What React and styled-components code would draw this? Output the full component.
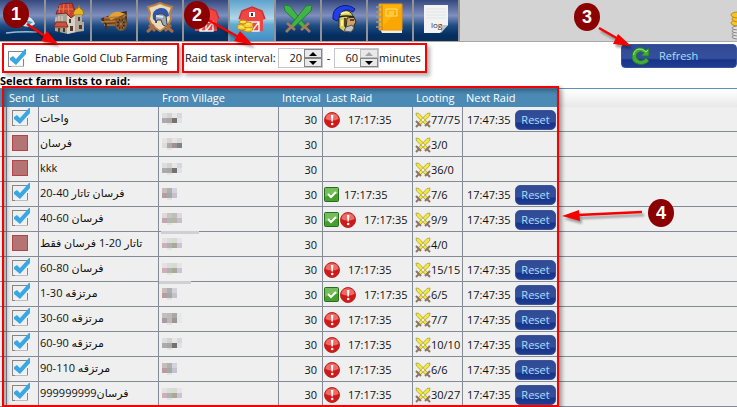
import React, { useState } from "react";
import styled, { createGlobalStyle, css } from "styled-components";

const GlobalStyle = createGlobalStyle`
  *, *::before, *::after { box-sizing: border-box; }
  body {
    margin: 0;
    overflow-x: hidden;
    background: #fff;
    color: #111;
    font-family: "Open Sans", "Noto Sans", "DejaVu Sans", sans-serif;
    font-size: 11px;
    line-height: 16px;
  }
  button, input { font: inherit; margin: 0; padding: 0; }
`;

const Page = styled.main`
  position: relative;
  display: flex;
  flex-direction: column;
`;

const Toolbar = styled.nav`
  display: flex;
  height: 42px;
  background: #d3d3d3;
  border-bottom: 1px solid #a9a9a9;
`;

const ToolButton = styled.button`
  width: 46px;
  border: 0;
  border-right: 2px solid #929294;
  background: ${(p) =>
    p.$active
      ? "linear-gradient(#5ea2cc, #b3d7ea 45%, #63a9d4 60%, #3f8fc4)"
      : "linear-gradient(#35497f, #7f8fbd 38%, #204d84 62%, #032f63 85%, #0b2c54)"};
  svg { display: block; }
`;

const Spacer = styled.div`flex: 1;`;

const Coins = styled.div`
  width: 7px;
  overflow: hidden;
  svg { display: block; }
`;

const Controls = styled.div`
  display: flex;
  align-items: flex-start;
  gap: 3px;
  height: 32px;
  padding: 1px 0 0 2px;
`;

const Framed = styled.div`
  display: flex;
  align-items: center;
  height: 30px;
  border: 2px solid #f60000;
  box-shadow: 3px 3px 4px rgba(0, 0, 0, 0.3);
  font-size: ${(p) => (p.$large ? 12 : 11)}px;
  white-space: nowrap;
`;

const EnableBox = styled(Framed)`
  width: 177px;
  padding-left: 4px;
  gap: 7px;
`;

const IntervalBox = styled(Framed)`
  width: 245px;
  padding-left: 1px;
`;

const IntervalLabel = styled.label`width: 93px;`;
const Dash = styled.span`
  width: 11px;
  text-align: center;
`;

const Stepper = styled.span`
  display: flex;
  width: 45px;
  height: 20px;
  border: 1px solid #c6c6cc;
`;

const StepInput = styled.input`
  width: 25px;
  border: 0;
  padding-right: 2px;
  text-align: right;
  background: #fff;
  color: #111;
`;

const StepButtons = styled.span`
  display: flex;
  flex-direction: column;
  width: 18px;
`;

const StepButton = styled.button`
  display: grid;
  place-items: center;
  flex: 1;
  min-height: 0;
  border: 1px solid ${(p) => (p.$dim ? "#bcbcbc" : "#858585")};
  background: #e9e9e9;
  color: ${(p) => (p.$dim ? "#a5a5a5" : "#000")};
`;

const blueGloss = css`
  border: 1px solid #3a5498;
  background: linear-gradient(#304b94 0%, #354f9d 60%, #17348a 68%, #203d91 100%);
  color: #a8def8;
`;

const RefreshButton = styled.button`
  ${blueGloss}
  display: flex;
  align-items: center;
  gap: 8px;
  width: 116px;
  height: 24px;
  margin: 1px 0 0 auto;
  padding-left: 9px;
  border-radius: 4px;
`;

const ResetButton = styled.button`
  ${blueGloss}
  width: 41px;
  height: 20px;
  border-radius: 5px;
  line-height: 18px;
`;

const Heading = styled.h1`
  margin: 0;
  height: 14px;
  font-size: 11px;
  font-weight: 700;
  line-height: 13px;
  color: #000;
`;

const TableArea = styled.section`position: relative;`;

const TableFrame = styled.div`
  position: absolute;
  top: -2px;
  bottom: 0;
  left: 2px;
  width: 557px;
  border: 2px solid #f60000;
  box-shadow: 3px 2px 4px rgba(0, 0, 0, 0.35), inset 3px 3px 4px rgba(0, 0, 0, 0.3);
  pointer-events: none;
`;

const Table = styled.table`
  width: 100%;
  table-layout: fixed;
  border-collapse: separate;
  border-spacing: 0;
  background: #efefef;
`;

const Head = styled.th`
  height: 19px;
  padding: 0 0 0 ${(p) => p.$pad ?? 3}px;
  border-top: 1px solid #5d8fba;
  background: ${(p) => (p.$blank ? "linear-gradient(#fff, #e8e8e8)" : "#4a8ab5")};
  color: #fff;
  font-weight: 400;
  text-align: left;
  line-height: 18px;
  white-space: nowrap;
`;

const Cell = styled.td`
  position: relative;
  height: 25px;
  padding: 1px 0 0 ${(p) => p.$pad ?? 1}px;
  border-bottom: 1px solid #858a96;
  border-right: ${(p) => (p.$open ? 0 : 1)}px solid #858a96;
  white-space: nowrap;
  vertical-align: middle;
`;

const NumberCell = styled(Cell)`
  padding-right: 5px;
  text-align: right;
`;

const ListCell = styled(Cell)`
  padding-top: 0;
  padding-bottom: 3px;
  line-height: 16px;
`;

const SendCell = styled(Cell)`
  vertical-align: top;
`;

const Inline = styled.span`
  display: flex;
  align-items: center;
  svg { flex: none; }
`;

const RaidTime = styled.span`margin-left: ${(p) => (p.$wide ? 8 : 4)}px;`;

const NextTime = styled.span`width: 48px;`;

const CheckWrap = styled.label`
  display: grid;
  width: 20px;
  height: 18px;
  > * { grid-area: 1 / 1; }
  svg { pointer-events: none; }
`;

const CheckInput = styled.input`
  appearance: none;
  width: 16px;
  height: 16px;
  margin-top: 2px;
  border: 1px solid #858585;
  background: transparent;
  ${(p) =>
    p.$red &&
    css`
      &:not(:checked) {
        border-color: #b04448;
        background: #b57474;
      }
    `}
`;

const RedactionBar = styled.span`
  position: absolute;
  top: -1px;
  left: ${(p) => p.$left}px;
  width: ${(p) => p.$width}px;
  height: 3px;
  background: #cfcfd4;
`;

const Badge = styled.span`
  position: absolute;
  left: ${(p) => p.$x}px;
  top: ${(p) => p.$y}px;
  width: 26px;
  height: 28px;
  border-radius: 50%;
  background: #8b0000;
  color: #fff;
  font: bold 18px/28px "Liberation Sans", sans-serif;
  text-align: center;
`;

const ArrowLayer = styled.svg`
  position: absolute;
  top: 0;
  left: 0;
  pointer-events: none;
  filter: drop-shadow(2px 3px 1px rgba(0, 0, 0, 0.35));
`;

function ToolIcon({ children }) {
  return <svg width="44" height="41" viewBox="0 0 44 41" aria-hidden="true">{children}</svg>;
}

function Barn() {
  return (
    <g>
      <path d="M9 19L12 11L22 7L32 11L35 19L33 20V31H11V20Z" fill="#ef4543" />
      <path d="M9 19L12 11L22 7L32 11L35 19" fill="none" stroke="#c93038" strokeWidth="1.5" />
      <rect x="19" y="12" width="6" height="5" fill="#fff" />
      <rect x="21" y="13" width="2" height="3" fill="#4a2930" />
      <path d="M16 22H29V31H16ZM22 22V31M16 31L22 22M29 22L22 31" fill="#ef4543" stroke="#f4f4f4" strokeWidth="1.4" />
    </g>
  );
}

const toolIcons = [
  ["Overview", <g><path d="M22 17Q31 14 35 24Q29 29 21 25Z" fill="#d8eef6" /><path d="M25 20L33 22L29 25Z" fill="#4ba9c4" /><path d="M6 33Q21 31 37 32" stroke="#9eb8ce" strokeWidth="1.5" fill="none" /></g>],
  ["Buildings", (
    <g>
      <path d="M13 12L25 8L31 14V32L22 34L9 31V20Z" fill="#a9a196" />
      <path d="M21 16L29 13V32L21 34Z" fill="#d8d2c5" />
      <path d="M10 14L14 4L26 3L30 14L25 18L20 13Z" fill="#c8402f" stroke="#78261e" />
      <path d="M8 27L10 22L20 22L22 27Z" fill="#c9553c" stroke="#842c20" />
      <path d="M14 5L13 13M18 4L17 13M22 4L23 14M11 9H27" stroke="#e87954" />
      <path d="M27 15Q28 9 32 8L33 5L34 8Q38 10 38 15Z" fill="#e7b51d" stroke="#9b701c" />
      <path d="M29 15H36V22H38V31L30 32Z" fill="#b4aa9c" />
      <path d="M12 28H14V32H12ZM17 28H19V32H17ZM23 19H25V23H23ZM24 26H27V31H24ZM32 17H34V21H32ZM33 25H36V29H33Z" fill="#51392f" />
      <path d="M10 17V21M13 16V21M16 16V21" stroke="#ded4c6" />
    </g>
  )],
  ["Market", (
    <g>
      <path d="M10 19L24 14L34 12V22L27 25L14 24Z" fill="#85501f" stroke="#3f2816" strokeWidth="1.5" />
      <path d="M16 17Q21 11 28 12L33 14L19 20Z" fill="#e3a235" />
      <path d="M9 22L26 21L34 15M12 18L27 17M12 25L25 25" fill="none" stroke="#b47a3b" strokeWidth="1.5" />
      <path d="M14 24V30" stroke="#4d3019" strokeWidth="2" />
      <ellipse cx="29" cy="24" rx="5" ry="6" fill="#3c291c" stroke="#7d552a" strokeWidth="2" />
      <path d="M29 18V30M24 24H34M26 20L32 28M32 20L26 28" stroke="#a97640" />
    </g>
  )],
  ["Defence", (
    <g>
      <path d="M10 32L34 9M34 32L10 9" stroke="#b96d35" strokeWidth="2" />
      <path d="M10 7L17 5L22 3L27 5L34 7L32 13L33 19Q31 26 22 31Q13 26 11 19L12 13Z" fill="#eadab9" stroke="#b88142" strokeWidth="2" />
      <path d="M15 19Q13 10 22 8Q30 7 31 16L28 17Q24 11 19 16L19 23Z" fill="#3155a9" />
      <path d="M17 17Q21 11 28 16L29 24L32 28L25 25L23 20H19L18 23Z" fill="#9ca7b1" stroke="#35414c" />
      <path d="M18 16L25 17" stroke="#dce5ea" strokeWidth="2" />
      <path d="M9 32L16 25M35 32L28 25M11 25L17 31M33 25L27 31" stroke="#a96d48" strokeWidth="2.5" />
    </g>
  )],
  ["Farms", <Barn />],
  ["Gold farming", (
    <g><Barn /><g fill="#f7cf31" stroke="#c18b15"><ellipse cx="18" cy="29" rx="5" ry="3" /><ellipse cx="12" cy="27" rx="5" ry="3" /><ellipse cx="18" cy="25" rx="5" ry="3" /><ellipse cx="13" cy="22" rx="4" ry="2" /></g><path d="M11 22H15M16 24H20M16 29H20M10 27H14" stroke="#fff087" /></g>
  )],
  ["Attack", (
    <g>
      <path d="M8 5L14 6L30 26L28 29L9 11Z" fill="#42b348" stroke="#237b37" />
      <path d="M36 5L30 6L14 26L16 29L35 11Z" fill="#42b348" stroke="#237b37" />
      <path d="M25 30L33 23M19 30L11 23M29 27L34 32M15 27L10 32" stroke="#a67b58" strokeWidth="2.5" />
    </g>
  )],
  ["Hero", (
    <g>
      <path d="M15 21L11 19Q10 10 17 7Q25 3 33 9L31 12Q23 7 18 14L17 20Z" fill="#203ee9" stroke="#101b7c" />
      <path d="M17 18Q18 11 25 11Q31 12 31 18L29 21L29 31L22 32L17 28Z" fill="#d8ce65" stroke="#302c22" />
      <path d="M25 18L32 17L34 22L32 25L32 30L28 32L24 28Z" fill="#d6a263" stroke="#352817" />
      <path d="M17 17Q24 15 32 17M23 18V26L27 30M28 20H32" fill="none" stroke="#26221e" strokeWidth="1.5" />
      <path d="M19 14Q23 11 27 13M20 20V26" fill="none" stroke="#fff680" strokeWidth="2" />
      <path d="M24 27L30 25L32 28L29 32L22 31Z" fill="#bfc4c6" stroke="#555" />
    </g>
  )],
  ["Notes", (
    <g>
      <path d="M12 29H34V33H14Z" fill="#f5ead7" />
      <path d="M11 4H34V30H11Z" fill="#ffb20b" stroke="#ed9400" />
      <path d="M12 30L34 6V30Z" fill="#f29b00" opacity=".5" />
      <path d="M14 5V30" stroke="#ca7900" />
      <path d="M8 7H13M8 12H13M8 17H13M8 22H13M8 27H13" stroke="#8e9ba0" strokeWidth="1.5" />
      <path d="M18 9H29V16H18ZM21 12H26M21 14H26" fill="none" stroke="#ffe07b" />
    </g>
  )],
  ["Log", (
    <g>
      <path d="M10 5H34V25L26 33H10Z" fill="#f3f3f3" />
      <path d="M34 25H27V33Z" fill="#bfc3c5" />
      <path d="M12 9H32M12 12H32M12 15H32M12 18H32" stroke="#dfe3e5" />
      <text x="17" y="28" fontFamily="Open Sans, sans-serif" fontSize="8" fill="#333">log</text>
    </g>
  )],
];

function Tick() {
  return (
    <svg width="20" height="18" viewBox="0 0 20 18" aria-hidden="true">
      <path d="M15.5 3V16.5H3" fill="none" stroke="#f4f4f4" strokeWidth="2" />
      <path d="M2 9L5 7L8 10L17 0H18V5L8 16L2 11Z" fill="#38a7e3" />
      <path d="M15.5 10V17" stroke="#858585" />
    </svg>
  );
}

function CheckBox({ label, initial, red, id }) {
  const [checked, setChecked] = useState(initial);
  return (
    <CheckWrap>
      <CheckInput id={id} type="checkbox" aria-label={label} checked={checked} $red={red} onChange={() => setChecked(!checked)} />
      {checked && <Tick />}
    </CheckWrap>
  );
}

function NumberStepper({ id, initial, label, dim }) {
  const [value, setValue] = useState(initial);
  return (
    <Stepper>
      <StepInput id={id} aria-label={label} inputMode="numeric" value={value} onChange={(e) => setValue(Number(e.target.value) || 0)} />
      <StepButtons>
        <StepButton $dim={dim} aria-label={`Increase ${label}`} onClick={() => setValue(value + 1)}>
          <svg width="8" height="4" viewBox="0 0 8 4"><path d="M0 4L4 0L8 4Z" fill="currentColor" /></svg>
        </StepButton>
        <StepButton aria-label={`Decrease ${label}`} onClick={() => setValue(value - 1)}>
          <svg width="8" height="4" viewBox="0 0 8 4"><path d="M0 0L4 4L8 0Z" fill="currentColor" /></svg>
        </StepButton>
      </StepButtons>
    </Stepper>
  );
}

function ErrorIcon() {
  return (
    <svg width="16" height="16" viewBox="0 0 16 16" role="img" aria-label="Losses">
      <circle cx="8" cy="8" r="7.5" fill="#d31918" stroke="#b62a28" />
      <path d="M1.5 7Q2 1.5 8 1.3Q14 1.5 14.5 7Q8 10 1.5 7Z" fill="#ee6a65" />
      <path d="M7 3H9.4L8.8 9.5H7.5Z" fill="#fff" /><circle cx="8.2" cy="12" r="1.3" fill="#fff" />
    </svg>
  );
}

function SuccessIcon() {
  return (
    <svg width="16" height="16" viewBox="0 0 16 16" role="img" aria-label="Success">
      <rect x=".5" y=".5" width="14" height="14" rx="1" fill="#46a02c" stroke="#286d1d" />
      <path d="M1 1H14V7Q7 6 1 10Z" fill="#74bd5a" />
      <path d="M4 7L7 10L12 5" fill="none" stroke="#fff" strokeWidth="2" />
    </svg>
  );
}

function Swords() {
  return (
    <svg width="16" height="16" viewBox="0 0 16 16" aria-hidden="true">
      <path d="M1 1L4 1.5L13 11L11 13L1.5 4Z M15 1L12 1.5L3 11L5 13L14.5 4Z" fill="#f4e83c" stroke="#aaa242" strokeWidth=".8" />
      <path d="M1 9L6 14M15 9L10 14M4 12L1 15M12 12L15 15" stroke="#8b7463" strokeWidth="2" />
    </svg>
  );
}

function RefreshIcon() {
  return (
    <svg width="20" height="20" viewBox="0 0 20 20" aria-hidden="true">
      <path d="M18 2V10H10L13 7Q9 4 6.5 7Q4 10 6.5 13Q10 17 15 12L18 15Q13 20 7 18Q0 16 1 9Q2 3 8 1.5Q12 1 15 4Z" fill="#46a83e" stroke="#217827" />
      <path d="M2.5 9Q3 4 8 3Q12 2.5 15 6L17 4" fill="none" stroke="#9be08a" />
    </svg>
  );
}

const mosaics = [
  ["#dedede #d3d3d3 #e6e6e6 #d8d8d8", "#ababae #aaa6a4 #77716e #dbe4ec"],
  ["#e6e3e3 #d6d6d6 #e8e3e1 #dadada", "#dedcd7 #aaabae #9e918f #798588"],
  ["#c9bcb9 #aeb1b1 #d4d3dc", "#b69ea0 #a4aaa9 #c6c1ce"],
  ["#e0d7d9 #c2c7c2 #bcc0b6 #ddd9e2", "#c3a6b0 #b3b8b5 #b5b6a4 #c6bdd2"],
  ["#e6e0e0 #d8dddc #d6dad1 #e6e4e9", "#cdafb8 #adb5b3 #aaa994 #cbc3dd"],
  ["#c5bdc3 #bdbaba #aea5a6 #e0ecec", "#a99ba4 #bbb9b7 #a19392 #dfeceb"],
];

function Mosaic({ kind }) {
  return (
    <svg width="20" height="16" viewBox="0 0 20 16" aria-hidden="true">
      {mosaics[kind].map((line, y) => line.split(" ").map((fill, x) => <rect key={`${x}-${y}`} x={x * 5} y={1 + y * 5} width="5" height="5" fill={fill} />))}
      <rect x="5" y="11" width="5" height="2" fill="#e3e3e3" />
    </svg>
  );
}

const farmLists = [
  { name: "واحات", on: true, bad: true, loot: "77/75", mosaic: 0 },
  { name: "فرسان", loot: "3/0", mosaic: 1 },
  { name: "kkk", loot: "36/0", mosaic: 0 },
  { name: "فرسان تاتار 40-20", on: true, good: true, loot: "7/6", mosaic: 2 },
  { name: "فرسان 60-40", on: true, good: true, bad: true, loot: "9/9", mosaic: 3 },
  { name: "تاتار 20-1 فرسان فقط", loot: "4/0", mosaic: 4, bar: [2, 38] },
  { name: "فرسان 80-60", on: true, bad: true, loot: "15/15", mosaic: 4 },
  { name: "مرتزقه 30-1", on: true, good: true, bad: true, loot: "6/5", mosaic: 2, bar: [0, 32] },
  { name: "مرتزقه 60-30", on: true, bad: true, loot: "7/7", mosaic: 5 },
  { name: "مرتزقه 90-60", on: true, bad: true, loot: "10/10", mosaic: 0 },
  { name: "مرتزقه 110-90", on: true, bad: true, loot: "6/6", mosaic: 2 },
  { name: "فرسان999999999", on: true, bad: true, loot: "30/27", mosaic: 4 },
];

function FarmRow({ item }) {
  return (
    <tr>
      <Cell />
      <SendCell $pad={5}><CheckBox label={`Send ${item.name}`} initial={!!item.on} red /></SendCell>
      <ListCell>{item.name}</ListCell>
      <Cell $pad={3}>
        <Inline><Mosaic kind={item.mosaic} /></Inline>
        {item.bar && <RedactionBar $left={item.bar[0]} $width={item.bar[1]} />}
      </Cell>
      <NumberCell>30</NumberCell>
      <Cell>
        {item.on && <Inline>{item.good && <SuccessIcon />}{item.bad && <ErrorIcon />}<RaidTime $wide={item.bad}>17:17:35</RaidTime></Inline>}
      </Cell>
      <Cell $pad={2}><Inline><Swords />{item.loot}</Inline></Cell>
      <Cell $pad={4} $open>{item.on && <Inline><NextTime>17:47:35</NextTime><ResetButton>Reset</ResetButton></Inline>}</Cell>
      <Cell $open />
    </tr>
  );
}

const arrows = [
  { line: "M27 24L48 38", head: "58,44 41,41 47,31" },
  { line: "M208 20L242 39", head: "253,45 234,41 240,31" },
  { line: "M599 28L620 40", head: "631,46 613,44 618,34" },
  { line: "M642 212L578 215", head: "562,216 579,210 580,221" },
];

export default function App() {
  return (
    <>
      <GlobalStyle />
      <Page>
        <Toolbar aria-label="Sections">
          {toolIcons.map(([name, icon], i) => (
            <ToolButton key={name} aria-label={name} $active={i === 5}><ToolIcon>{icon}</ToolIcon></ToolButton>
          ))}
          <Spacer />
          <Coins>
            <svg width="16" height="41" viewBox="0 0 16 41" aria-hidden="true">
              <g fill="#f4c62a" stroke="#bd8a16"><ellipse cx="8" cy="23" rx="7" ry="3" /><ellipse cx="9" cy="19" rx="7" ry="3" /><ellipse cx="8" cy="15" rx="7" ry="3" /></g>
              <g fill="#e0e0e0" stroke="#888"><ellipse cx="9" cy="37" rx="7" ry="2" /><ellipse cx="9" cy="34" rx="7" ry="2" /><ellipse cx="9" cy="31" rx="7" ry="2" /><ellipse cx="9" cy="28" rx="7" ry="2" /></g>
            </svg>
          </Coins>
        </Toolbar>
        <Controls>
          <EnableBox>
            <CheckBox id="enable" label="Enable Gold Club Farming" initial />
            <label htmlFor="enable">Enable Gold Club Farming</label>
          </EnableBox>
          <IntervalBox>
            <IntervalLabel htmlFor="from">Raid task interval:</IntervalLabel>
            <NumberStepper id="from" initial={20} label="minimum interval" />
            <Dash>-</Dash>
            <NumberStepper id="to" initial={60} label="maximum interval" dim />
            <span>minutes</span>
          </IntervalBox>
          <RefreshButton><RefreshIcon />Refresh</RefreshButton>
        </Controls>
        <Heading>Select farm lists to raid:</Heading>
        <TableArea>
          <Table>
            <colgroup>
              <col width="7" /><col width="32" /><col width="120" /><col width="120" /><col width="44" /><col width="90" /><col width="50" /><col width="96" /><col />
            </colgroup>
            <thead>
              <tr>
                <Head />
                <Head $pad={2}>Send</Head>
                <Head $pad={2}>List</Head>
                <Head>From Village</Head>
                <Head>Interval</Head>
                <Head>Last Raid</Head>
                <Head>Looting</Head>
                <Head>Next Raid</Head>
                <Head $blank />
              </tr>
            </thead>
            <tbody>{farmLists.map((item) => <FarmRow key={item.name} item={item} />)}</tbody>
          </Table>
          <TableFrame />
        </TableArea>
        <ArrowLayer width="737" height="300" viewBox="0 0 737 300" aria-hidden="true">
          {arrows.map((a) => (
            <g key={a.line}><path d={a.line} stroke="#f60000" strokeWidth="2.5" /><polygon points={a.head} fill="#f60000" /></g>
          ))}
        </ArrowLayer>
        <Badge $x={3} $y={0}>1</Badge>
        <Badge $x={184} $y={1}>2</Badge>
        <Badge $x={574} $y={3}>3</Badge>
        <Badge $x={648} $y={199}>4</Badge>
      </Page>
    </>
  );
}
